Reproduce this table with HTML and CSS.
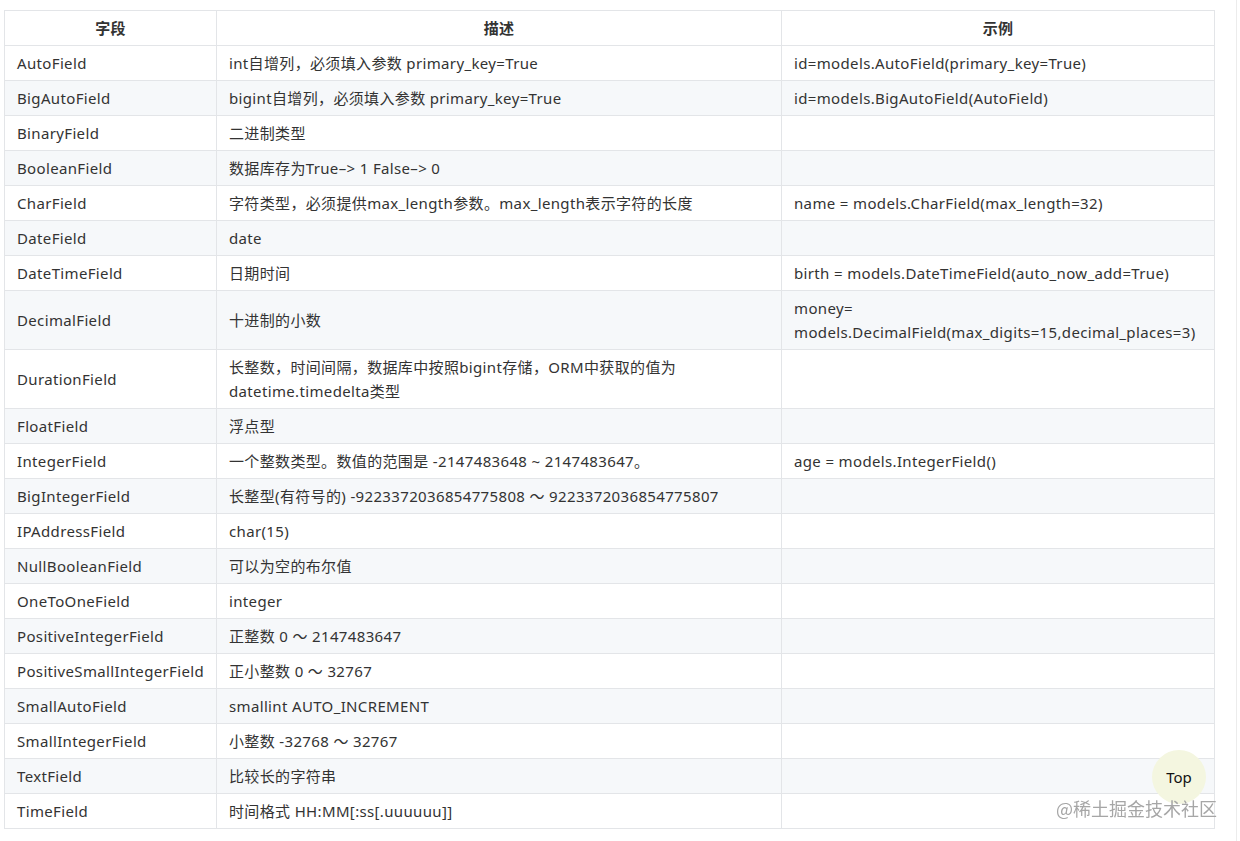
FILE: index.html
```html
<!DOCTYPE html>
<html lang="zh">
<head>
<meta charset="utf-8">
<title>Django 字段</title>
<link rel="stylesheet" href="styles.css">
</head>
<body>
<div class="page">
  <table class="fields">
    <colgroup>
      <col class="c1"><col class="c2"><col class="c3">
    </colgroup>
    <thead>
      <tr><th>字段</th><th>描述</th><th>示例</th></tr>
    </thead>
    <tbody>
      <tr><td>AutoField</td><td>int自增列，必须填入参数 primary_key=True</td><td>id=models.AutoField(primary_key=True)</td></tr>
      <tr><td>BigAutoField</td><td>bigint自增列，必须填入参数 primary_key=True</td><td>id=models.BigAutoField(AutoField)</td></tr>
      <tr><td>BinaryField</td><td>二进制类型</td><td></td></tr>
      <tr><td>BooleanField</td><td>数据库存为True–&gt; 1 False–&gt; 0</td><td></td></tr>
      <tr><td>CharField</td><td>字符类型，必须提供max_length参数。max_length表示字符的长度</td><td>name = models.CharField(max_length=32)</td></tr>
      <tr><td>DateField</td><td>date</td><td></td></tr>
      <tr><td>DateTimeField</td><td>日期时间</td><td>birth = models.DateTimeField(auto_now_add=True)</td></tr>
      <tr><td>DecimalField</td><td>十进制的小数</td><td>money=<br>models.DecimalField(max_digits=15,decimal_places=3)</td></tr>
      <tr><td>DurationField</td><td>长整数，时间间隔，数据库中按照bigint存储，ORM中获取的值为<br>datetime.timedelta类型</td><td></td></tr>
      <tr><td>FloatField</td><td>浮点型</td><td></td></tr>
      <tr><td>IntegerField</td><td>一个整数类型。数值的范围是 -2147483648 ~ 2147483647。</td><td>age = models.IntegerField()</td></tr>
      <tr><td>BigIntegerField</td><td>长整型(有符号的) -9223372036854775808 ～ 9223372036854775807</td><td></td></tr>
      <tr><td>IPAddressField</td><td>char(15)</td><td></td></tr>
      <tr><td>NullBooleanField</td><td>可以为空的布尔值</td><td></td></tr>
      <tr><td>OneToOneField</td><td>integer</td><td></td></tr>
      <tr><td>PositiveIntegerField</td><td>正整数 0 ～ 2147483647</td><td></td></tr>
      <tr><td>PositiveSmallIntegerField</td><td>正小整数 0 ～ 32767</td><td></td></tr>
      <tr><td>SmallAutoField</td><td>smallint AUTO_INCREMENT</td><td></td></tr>
      <tr><td>SmallIntegerField</td><td>小整数 -32768 ～ 32767</td><td></td></tr>
      <tr><td>TextField</td><td>比较长的字符串</td><td></td></tr>
      <tr><td>TimeField</td><td>时间格式 HH:MM[:ss[.uuuuuu]]</td><td></td></tr>
    </tbody>
  </table>
</div>
<div class="top-btn">Top</div>
<div class="watermark">@稀土掘金技术社区</div>
</body>
</html>
```
FILE: styles.css
```css
html, body {
  margin: 0;
  padding: 0;
  background: #ffffff;
}
body {
  font-family: "Noto Sans", "Noto Sans CJK SC", sans-serif;
  color: #333333;
  font-size: 15px;
}
.page {
  width: 1237px;
  padding: 10px 0 0 4px;
  border-right: 1px solid #ececec;
  min-height: 841px;
  box-sizing: border-box;
}
.fields {
  border-collapse: collapse;
  width: 1210px;
  table-layout: fixed;
}
.c1 { width: 212px; }
.c2 { width: 565px; }
.c3 { width: 433px; }
.fields th, .fields td {
  border: 1px solid #e3e5e8;
  padding: 5px 12px;
  line-height: 24px;
  letter-spacing: 0.35px;
  text-align: left;
  vertical-align: middle;
}
.fields th {
  text-align: center;
  font-weight: 600;
  background: #ffffff;
}
.fields tbody tr:nth-child(even) td {
  background: #f6f8fa;
}
.top-btn {
  position: fixed;
  left: 1152px;
  top: 750px;
  width: 54px;
  height: 54px;
  border-radius: 50%;
  background: #f4f6e0;
  color: #111;
  font-size: 15px;
  display: flex;
  align-items: center;
  justify-content: center;
}
.watermark {
  position: fixed;
  left: 1056px;
  top: 795px;
  font-size: 18px;
  color: #a6a6a6;
  font-family: "Noto Sans CJK SC", sans-serif;
  white-space: nowrap;
}
```
